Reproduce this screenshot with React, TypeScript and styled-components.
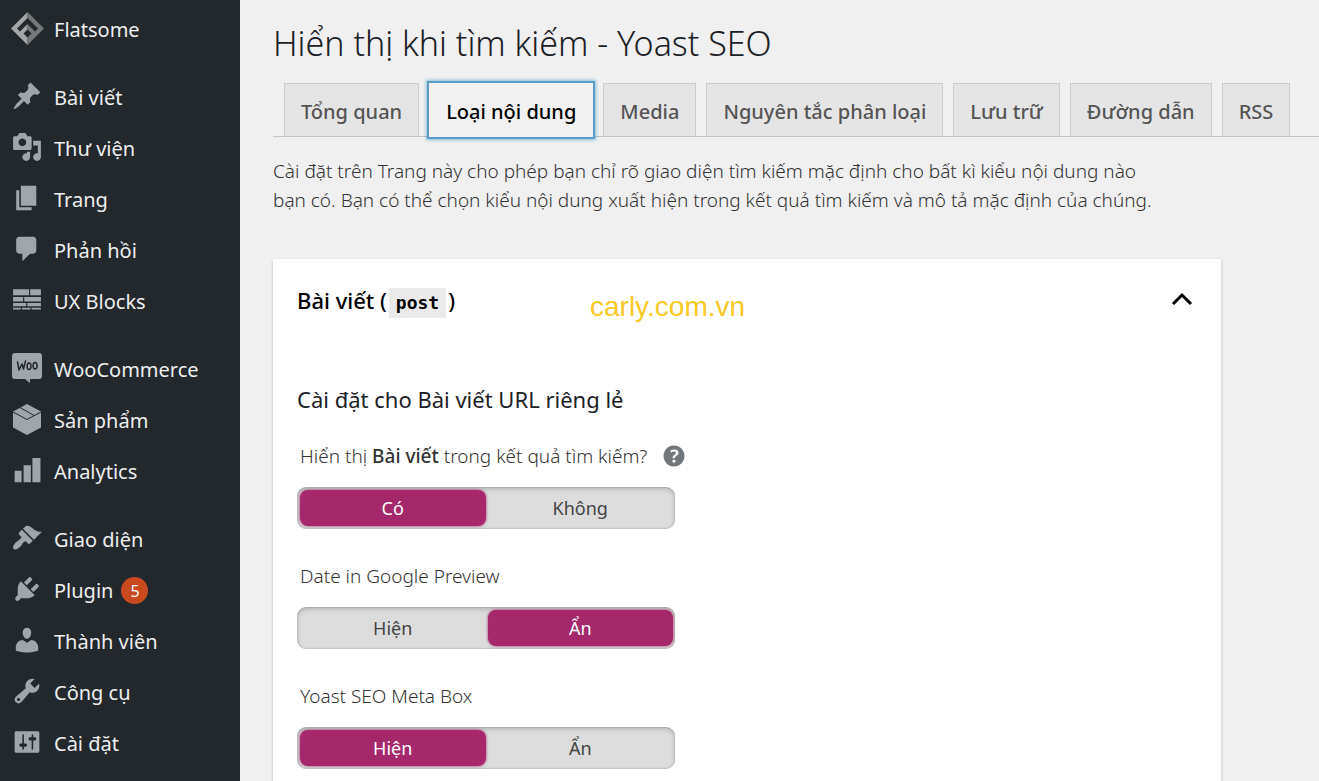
import React from 'react';
import styled, { createGlobalStyle, css } from 'styled-components';

const GlobalStyle = createGlobalStyle`
  *, *::before, *::after { box-sizing: border-box; }
  body {
    margin: 0;
    background: #f0f0f0;
    color: #333;
    font-family: 'Noto Sans', 'Open Sans', sans-serif;
    font-size: 19px;
    font-weight: 300;
  }
`;

const Page = styled.div`
  display: flex;
  min-height: 100vh;
`;

const Sidebar = styled.nav`
  flex: 0 0 240px;
  padding-top: 4px;
  background: #23282d;
`;

const MenuGroup = styled.ul`
  margin: 0 0 17px;
  padding: 0;
  list-style: none;
`;

const MenuLink = styled.a`
  display: flex;
  align-items: center;
  gap: 8px;
  height: 51px;
  padding-left: 10px;
  color: #eee;
  font-size: 20px;
  font-weight: 400;
  text-decoration: none;
`;

const MenuIcon = styled.svg`
  flex: none;
  width: 34px;
  height: 34px;
  margin: 0 2px 3px 0;
  fill: #a0a5aa;
`;

const Badge = styled.span`
  display: grid;
  place-items: center;
  width: 27px;
  height: 27px;
  border-radius: 50%;
  background: #ca4a1f;
  color: #fff;
  font-size: 16px;
`;

const Main = styled.main`
  flex: 1;
  min-width: 0;
  display: flex;
  flex-direction: column;
  padding: 16px 0 0 33px;
`;

const Title = styled.h1`
  margin: 0;
  color: #1c2126;
  font-size: 34px;
  font-weight: 300;
  line-height: 54px;
`;

const Tabs = styled.nav`
  display: flex;
  gap: 10px;
  margin-top: 13px;
  padding-left: 11px;
  border-bottom: 1px solid #c4c4c4;
  white-space: nowrap;
`;

const Tab = styled.a<{ $active?: boolean }>`
  height: 53px;
  padding: 0 16px;
  border: 1px solid #ccc;
  border-bottom: 0;
  background: #e5e5e5;
  color: #555;
  font-size: 20px;
  font-weight: 500;
  line-height: 56px;
  text-decoration: none;
  ${({ $active }) =>
    $active &&
    css`
      margin-bottom: -1px;
      height: 54px;
      border-color: #f1f1f1;
      background: #f1f1f1;
      color: #000;
      box-shadow: 0 0 0 2px #5b9dc4, 0 0 3px 3px rgba(30, 140, 190, 0.5);
    `}
`;

const Intro = styled.p`
  max-width: 900px;
  margin: 20px 0 0;
  line-height: 29px;
`;

const Card = styled.section`
  position: relative;
  flex: 1;
  width: 100%;
  max-width: 948px;
  margin-top: 44px;
  padding: 24px 24px 0;
  background: #fff;
  box-shadow: 0 1px 3px rgba(0, 0, 0, 0.2);
`;

const CardToggle = styled.button`
  display: flex;
  align-items: center;
  justify-content: space-between;
  width: 100%;
  height: 36px;
  padding: 0 4px 0 0;
  border: 0;
  background: none;
  color: #000;
  font: inherit;
  font-size: 22px;
  font-weight: 500;
`;

const Code = styled.code`
  display: inline-block;
  margin: 0 2px;
  padding: 0 7px;
  background: #eaeaea;
  font-family: 'DejaVu Sans Mono', monospace;
  font-size: 18px;
  font-weight: 700;
  line-height: 30px;
`;

const Chevron = styled.svg`
  width: 22px;
  height: 22px;
  fill: none;
  stroke: #000;
  stroke-width: 3;
`;

const Watermark = styled.span`
  position: absolute;
  top: 32px;
  left: 317px;
  color: #f9c822;
  font-family: 'Liberation Sans', Arial, sans-serif;
  font-size: 28px;
  font-weight: 400;
`;

const SectionTitle = styled.h2`
  margin: 64px 0 28px;
  color: #1c2126;
  font-size: 22px;
  font-weight: 400;
  line-height: 32px;
`;

const Field = styled.fieldset`
  margin: 0 0 34px;
  padding: 0;
  border: 0;
`;

const Legend = styled.legend`
  display: flex;
  align-items: center;
  gap: 15px;
  height: 26px;
  margin-bottom: 18px;
  padding: 0 3px;

  b { font-weight: 500; }
`;

const HelpButton = styled.button`
  display: flex;
  padding: 0;
  border: 0;
  background: none;
`;

const HelpIcon = styled.svg`
  width: 24px;
  height: 24px;
  fill: #72777c;
`;

const Switch = styled.div`
  display: flex;
  gap: 2px;
  width: 378px;
  max-width: 100%;
  height: 42px;
  padding: 3px 2px 3px 3px;
  border-radius: 9px;
  background: #dcdcdc;
  box-shadow: inset 0 2px 5px rgba(0, 0, 0, 0.2), inset 0 0 1px 1px rgba(0, 0, 0, 0.08);
`;

const Radio = styled.input`
  position: absolute;
  opacity: 0;
`;

const Option = styled.label`
  flex: 1;
  display: grid;
  place-items: center;
  border-radius: 8px;
  color: #444;
  font-size: 18px;
  font-weight: 400;

  &:has(input:checked) {
    background: #a4286a;
    color: #fff;
    box-shadow: 0 0 2px 1px rgba(164, 40, 106, 0.5);
  }
`;

type Item = { label: string; icon: React.ReactNode; box?: string; badge?: number };

const dash = '-1 -1 22 22';

const groups: Item[][] = [
  [
    {
      label: 'Flatsome',
      box: '0 0 34 34',
      icon: (
        <>
          <path fill="#a4a7aa" d="M17.500 1L1 17.500 17.500 34v-7.500l-4-4 4-4V13L10 20.500l-3-3 10.500-10.500z" />
          <path fill="#74787b" d="M17.500 1L34 17.500 17.500 34v-7.500l4-4-4-4V13l7.500 7.500 3-3-10.500-10.500z" />
        </>
      ),
    },
  ],
  [
    {
      label: 'Bài viết',
      icon: <path d="M10.44 3.02l1.82-1.82 6.36 6.35-1.83 1.82c-1.05-.68-2.48-.57-3.41.36l-.75.75c-.92.93-1.04 2.35-.35 3.41l-1.83 1.82-2.41-2.41-2.8 2.79c-.42.42-3.38 2.71-3.8 2.29s1.86-3.39 2.28-3.81l2.79-2.79L4.1 9.36l1.83-1.82c1.05.69 2.48.57 3.4-.36l.75-.75c.93-.92 1.05-2.35.36-3.41z" />,
    },
    {
      label: 'Thư viện',
      icon: <path fillRule="evenodd" d="M13 11V4c0-.55-.45-1-1-1h-1.67L9 1H5L3.67 3H2c-.55 0-1 .45-1 1v7c0 .55.45 1 1 1h10c.55 0 1-.45 1-1zM7 4.500c1.380 0 2.500 1.120 2.500 2.500S8.380 9.500 7 9.500 4.500 8.380 4.500 7 5.620 4.500 7 4.500zM14 6h5v10.500c0 1.380-1.120 2.500-2.500 2.500S14 17.880 14 16.500s1.120-2.500 2.500-2.500c.17 0 .34.02.5.05V9h-3V6zm-4 8.050V13h2v3.500c0 1.380-1.120 2.500-2.500 2.500S7 17.880 7 16.500 8.120 14 9.500 14c.17 0 .34.02.5.05z" />,
    },
    { label: 'Trang', icon: <path d="M6 15V2h10v13H6zm-1 1h8v2H3V5h2v11z" /> },
    {
      label: 'Phản hồi',
      icon: <path d="M5 2h9c1.1 0 2 .9 2 2v7c0 1.1-.9 2-2 2h-2l-5 5v-5H5c-1.100 0-2-.9-2-2V4c0-1.100.9-2 2-2z" />,
    },
    {
      label: 'UX Blocks',
      icon: <path d="M1 3h10.300v4H1zM12 3h7v4h-7zM1 8h6.500v3H1zM8.200 8H19v3H8.200zM1 12h8.500v2H1zM10.200 12H19v2h-8.800zM1 15h5v1.200H1zM6.700 15h5.600v1.200H6.700zM13 15h6v1.200h-6z" />,
    },
  ],
  [
    {
      label: 'WooCommerce',
      box: '0 0 34 34',
      icon: (
        <>
          <path d="M5 2h24a3 3 0 0 1 3 3v20a3 3 0 0 1-3 3h-9v4l-5-4H5a3 3 0 0 1-3-3V5a3 3 0 0 1 3-3z" />
          <path
            fill="none"
            stroke="#23282d"
            strokeWidth="1.500"
            strokeLinecap="round"
            strokeLinejoin="round"
            d="M7.500 11l1.500 8 3-6 1.500 5 2-8M19 12c3 0 2.500 6.500 0 6.500s-2.500-6.500 0-6.500zM25 11.500c3 0 2.500 6.500 0 6.500s-2.500-6.500 0-6.500z"
          />
        </>
      ),
    },
    {
      label: 'Sản phẩm',
      box: '0 0 34 34',
      icon: (
        <>
          <path d="M17 2l14 7.500v16L17 33 3 25.500v-16z" />
          <path fill="none" stroke="#23282d" strokeWidth="1" d="M3 10l14 7.500L31 10M10 5.500l14 8" />
        </>
      ),
    },
    { label: 'Analytics', icon: <path d="M13.500 2.200h5.200V18h-5.200zM7.800 7h4.700v11H7.800zM2 10.500h4.500V18H2z" /> },
  ],
  [
    {
      label: 'Giao diện',
      icon: <path d="M14.480 11.060L7.410 3.990l1.500-1.500c.5-.56 2.300-.47 3.510.32 1.210.8 1.430 1.280 2.910 2.100 1.180.64 2.450 1.260 4.450.85zm-.71.71L6.700 4.700 4.930 6.470c-.39.39-.39 1.020 0 1.410l1.060 1.060c.39.39.39 1.030 0 1.420-.6.6-1.430 1.110-2.210 1.690-.35.26-.7.53-1.010.84C1.430 14.230.4 16.080 1.400 17.070c.99 1 2.840-.03 4.180-1.360.31-.31.58-.66.85-1.020.57-.78 1.080-1.610 1.690-2.210.39-.39 1.020-.39 1.410 0l1.060 1.060c.39.39 1.020.39 1.410 0z" />,
    },
    {
      label: 'Plugin',
      badge: 5,
      icon: <path d="M13.110 4.360L9.870 7.600 8 5.730l3.240-3.240c.35-.34 1.050-.2 1.560.32.52.51.66 1.210.31 1.550zm-8 1.770l.91-1.120 9.010 9.010-1.190.84c-.71.71-2.630 1.160-3.820 1.160H6.140L4.900 17.260c-.59.59-1.540.59-2.120 0-.59-.58-.59-1.530 0-2.120l1.240-1.240v-3.880c0-1.130.4-3.190 1.090-3.890zm7.260 3.970l3.240-3.240c.34-.35 1.040-.21 1.550.31.52.51.66 1.210.31 1.550l-3.240 3.250z" />,
    },
    {
      label: 'Thành viên',
      icon: <path d="M10 9.250c-2.270 0-2.730-3.440-2.730-3.440C7 4.020 7.820 2 9.970 2c2.160 0 2.980 2.020 2.710 3.810 0 0-.41 3.440-2.680 3.440zm0 2.570L12.720 10c2.390 0 4.520 2.330 4.520 4.530v2.490s-3.650 1.130-7.240 1.130c-3.650 0-7.240-1.130-7.240-1.130v-2.490c0-2.250 1.940-4.480 4.470-4.480z" />,
    },
    {
      label: 'Công cụ',
      icon: <path fillRule="evenodd" d="M16.680 9.770c-1.340 1.340-3.300 1.670-4.950.99l-5.410 6.520c-.99.99-2.590.99-3.580 0s-.99-2.590 0-3.570l6.520-5.420c-.68-1.650-.35-3.610.99-4.950 1.280-1.280 3.120-1.620 4.720-1.060l-2.890 2.890 2.820 2.820 2.860-2.870c.53 1.580.18 3.390-1.080 4.650zM3.810 16.210c.4.39 1.040.39 1.430 0 .4-.4.4-1.040 0-1.430-.39-.4-1.030-.4-1.430 0-.39.39-.39 1.030 0 1.430z" />,
    },
    {
      label: 'Cài đặt',
      icon: <path fillRule="evenodd" d="M18 16V4c0-.55-.45-1-1-1H3c-.55 0-1 .45-1 1v12c0 .55.45 1 1 1h14c.55 0 1-.45 1-1zM8 11h1c.55 0 1 .45 1 1s-.45 1-1 1H8v1.500c0 .28-.22.5-.5.5s-.5-.22-.5-.5V13H6c-.55 0-1-.45-1-1s.45-1 1-1h1V5.500c0-.28.22-.5.5-.5s.5.22.5.5V11zm5-2h-1c-.55 0-1-.45-1-1s.45-1 1-1h1V5.500c0-.28.22-.5.5-.5s.5.22.5.5V7h1c.55 0 1 .45 1 1s-.45 1-1 1h-1v5.500c0 .28-.22.5-.5.5s-.5-.22-.5-.5V9z" />,
    },
  ],
];

const tabs = ['Tổng quan', 'Loại nội dung', 'Media', 'Nguyên tắc phân loại', 'Lưu trữ', 'Đường dẫn', 'RSS'];

type FieldProps = {
  name: string;
  label: React.ReactNode;
  options: [string, string];
  selected: number;
  help?: boolean;
};

function SwitchField({ name, label, options, selected, help }: FieldProps) {
  return (
    <Field>
      <Legend>
        <span>{label}</span>
        {help && (
          <HelpButton type="button" aria-label="Trợ giúp">
            <HelpIcon viewBox="2 2 16 16" aria-hidden="true">
              <path
                fillRule="evenodd"
                d="M17 10c0-3.870-3.140-7-7-7-3.870 0-7 3.130-7 7s3.130 7 7 7c3.860 0 7-3.130 7-7zm-6.300 1.480H9.140v-.43c0-.38.08-.7.24-.98s.46-.57.88-.89c.41-.29.68-.53.81-.71.14-.18.2-.39.2-.62 0-.25-.09-.44-.28-.58-.19-.13-.45-.19-.79-.19-.58 0-1.250.19-2 .57l-.64-1.280c.87-.49 1.800-.74 2.770-.74.81 0 1.450.2 1.920.58.48.39.71.91.71 1.550 0 .43-.09.8-.29 1.110-.19.32-.57.67-1.110 1.060-.38.28-.61.49-.71.63-.1.15-.15.34-.15.57v.35zm-1.470 2.740c-.18-.17-.27-.42-.27-.73 0-.33.08-.58.26-.75s.43-.25.77-.25c.32 0 .57.09.75.26s.27.42.27.74c0 .3-.09.55-.27.72-.18.18-.43.27-.75.27-.33 0-.58-.09-.76-.26z"
              />
            </HelpIcon>
          </HelpButton>
        )}
      </Legend>
      <Switch>
        {options.map((text, i) => (
          <Option key={text}>
            <Radio type="radio" name={name} defaultChecked={i === selected} />
            {text}
          </Option>
        ))}
      </Switch>
    </Field>
  );
}

export default function App() {
  return (
    <Page>
      <GlobalStyle />
      <Sidebar>
        {groups.map((items) => (
          <MenuGroup key={items[0].label}>
            {items.map(({ label, icon, box, badge }) => (
              <li key={label}>
                <MenuLink href="#">
                  <MenuIcon viewBox={box ?? dash} aria-hidden="true">{icon}</MenuIcon>
                  {label}
                  {badge && <Badge>{badge}</Badge>}
                </MenuLink>
              </li>
            ))}
          </MenuGroup>
        ))}
      </Sidebar>
      <Main>
        <Title>Hiển thị khi tìm kiếm - Yoast SEO</Title>
        <Tabs>
          {tabs.map((text, i) => (
            <Tab key={text} href="#" $active={i === 1}>{text}</Tab>
          ))}
        </Tabs>
        <Intro>
          Cài đặt trên Trang này cho phép bạn chỉ rõ giao diện tìm kiếm mặc định cho bất kì kiểu nội dung nào bạn có.
          Bạn có thể chọn kiểu nội dung xuất hiện trong kết quả tìm kiếm và mô tả mặc định của chúng.
        </Intro>
        <Card>
          <CardToggle type="button" aria-expanded="true">
            <span>Bài viết (<Code>post</Code>)</span>
            <Chevron viewBox="0 0 22 22" aria-hidden="true">
              <path d="M2 14l9-9 9 9" />
            </Chevron>
          </CardToggle>
          <Watermark>carly.com.vn</Watermark>
          <SectionTitle>Cài đặt cho Bài viết URL riêng lẻ</SectionTitle>
          <SwitchField
            name="show-posts"
            label={<>Hiển thị <b>Bài viết</b> trong kết quả tìm kiếm?</>}
            options={['Có', 'Không']}
            selected={0}
            help
          />
          <SwitchField name="date-preview" label="Date in Google Preview" options={['Hiện', 'Ẩn']} selected={1} />
          <SwitchField name="meta-box" label="Yoast SEO Meta Box" options={['Hiện', 'Ẩn']} selected={0} />
        </Card>
      </Main>
    </Page>
  );
}
